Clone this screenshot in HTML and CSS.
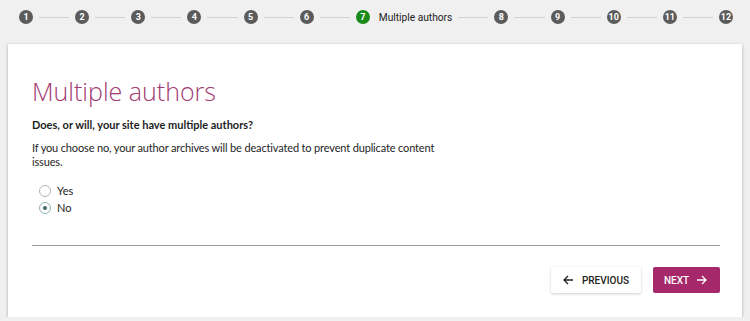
FILE: index.html
```html
<!DOCTYPE html>
<html lang="en">
<head>
  <meta charset="UTF-8" />
  <title>Configuration wizard - Multiple authors</title>
  <link rel="stylesheet" href="styles.css">
</head>
<body>
  <ol class="stepper">
    <li class="step"><span class="dot">1</span></li>
    <li class="line"></li>
    <li class="step"><span class="dot">2</span></li>
    <li class="line"></li>
    <li class="step"><span class="dot">3</span></li>
    <li class="line"></li>
    <li class="step"><span class="dot">4</span></li>
    <li class="line"></li>
    <li class="step"><span class="dot">5</span></li>
    <li class="line"></li>
    <li class="step"><span class="dot">6</span></li>
    <li class="line"></li>
    <li class="step active"><span class="dot">7</span><span class="step-label">Multiple authors</span></li>
    <li class="line"></li>
    <li class="step"><span class="dot">8</span></li>
    <li class="line"></li>
    <li class="step"><span class="dot">9</span></li>
    <li class="line"></li>
    <li class="step"><span class="dot">10</span></li>
    <li class="line"></li>
    <li class="step"><span class="dot">11</span></li>
    <li class="line"></li>
    <li class="step"><span class="dot">12</span></li>
  </ol>

  <div class="card">
    <h1 class="title">Multiple authors</h1>
    <p class="question">Does, or will, your site have multiple authors?</p>
    <p class="help">If you choose no, your author archives will be deactivated to prevent duplicate content issues.</p>

    <div class="choices">
      <label class="choice"><span class="radio"></span>Yes</label>
      <label class="choice"><span class="radio checked"></span>No</label>
    </div>

    <hr class="divider">

    <div class="actions">
      <button class="btn btn-prev">
        <svg width="11" height="10" viewBox="0 0 11 10"><path d="M10 5H1.5M5 1L1 5l4 4" fill="none" stroke="#222" stroke-width="1.3"/></svg>
        Previous
      </button>
      <button class="btn btn-next">
        Next
        <svg width="11" height="10" viewBox="0 0 11 10"><path d="M1 5h8.5M6 1l4 4-4 4" fill="none" stroke="#fff" stroke-width="1.3"/></svg>
      </button>
    </div>
  </div>
</body>
</html>
```

FILE: styles.css
```css
body {
  margin: 0;
  padding: 0 8px;
  background: #f0f0f1;
  font-family: Lato, 'Open Sans', sans-serif;
  color: #1e1e1e;
}

.stepper {
  list-style: none;
  margin: 0 -8px;
  padding: 10px 17px 0 19px;
  height: 34px;
  box-sizing: border-box;
  display: flex;
  align-items: flex-start;
  font-family: Roboto, sans-serif;
}

.step {
  display: flex;
  align-items: center;
  height: 14px;
}

.dot {
  width: 14px;
  height: 14px;
  border-radius: 50%;
  background: #5b5b5b;
  color: #fff;
  font-size: 9px;
  font-weight: 700;
  line-height: 14px;
  text-align: center;
}

.step.active .dot {
  background: #1a8a1a;
}

.step-label {
  margin-left: 9px;
  font-size: 10.2px;
  color: #222;
}

.line {
  flex: 1;
  height: 1px;
  margin: 7px 6px 0;
  background: #d2d2d2;
}

.card {
  margin-top: 10px;
  background: #fff;
  box-shadow: 0 1px 3px rgba(0,0,0,0.3);
  padding: 31px 22px 23px 24px;
  height: 273px;
  box-sizing: border-box;
}

.title {
  margin: 0;
  font-family: 'Open Sans', sans-serif;
  font-size: 25px;
  font-weight: 300;
  line-height: 32px;
  color: #a23a72;
}

.question {
  margin: 10px 0 0;
  font-size: 11px;
  font-weight: 700;
  line-height: 16px;
}

.help {
  margin: 8px 0 0;
  width: 410px;
  font-size: 11px;
  letter-spacing: -0.15px;
  line-height: 14px;
}

.choices {
  margin-top: 13px;
  padding-left: 7px;
}

.choice {
  display: flex;
  align-items: center;
  height: 17px;
  font-size: 11px;
}

.radio {
  width: 10px;
  height: 10px;
  border: 1px solid #b5b5b5;
  border-radius: 50%;
  margin-right: 6px;
  box-sizing: content-box;
  position: relative;
}

.radio.checked {
  border-color: #8fb3b3;
}

.radio.checked::after {
  content: '';
  position: absolute;
  left: 3px;
  top: 3px;
  width: 4px;
  height: 4px;
  border-radius: 50%;
  background: #3d6b6b;
}

.divider {
  margin: 29px 0 0;
  border: none;
  border-top: 1px solid #9a9a9a;
}

.actions {
  display: flex;
  justify-content: flex-end;
  gap: 12px;
  margin-top: 21px;
}

.btn {
  height: 26px;
  display: flex;
  align-items: center;
  justify-content: space-between;
  border: none;
  border-radius: 2px;
  font-family: Roboto, sans-serif;
  font-size: 10px;
  font-weight: 500;
  text-transform: uppercase;
  cursor: pointer;
}

.btn-prev {
  width: 90px;
  padding: 0 12px;
  background: #fff;
  color: #222;
  box-shadow: 0 1px 3px rgba(0,0,0,0.2);
}

.btn-next {
  width: 67px;
  padding: 0 13px 0 11px;
  background: #a4286a;
  color: #fff;
}
```
